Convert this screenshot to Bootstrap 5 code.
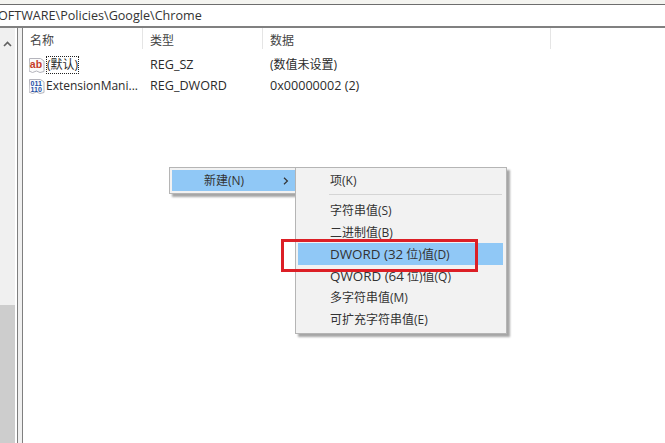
<!DOCTYPE html>
<html lang="zh-CN">
<head>
<meta charset="UTF-8">
<meta name="viewport" content="width=device-width, initial-scale=1.0">
<title>注册表编辑器</title>
<link href="https://cdn.jsdelivr.net/npm/bootstrap@5.3.3/dist/css/bootstrap.min.css" rel="stylesheet">
<style>
  html, body { height: 443px; overflow: hidden; }
  body { font-family: "Open Sans", "Noto Sans CJK SC", sans-serif; font-size: 12px; color: #2b2b2b; background: #fff; line-height: 16px; position: relative; }
  .top-strip { height: 4px; background: #f4f4f0; border-bottom: 1px solid #6d6d6d; box-sizing: content-box; }
  .addr-bar { height: 21px; font-size: 12.6px; line-height: 21px; white-space: nowrap; color: #333; border-bottom: 2px solid #808080; box-sizing: content-box; overflow: hidden; }
  .addr-bar span { display: inline-block; margin-left: -2px; }
  .main-area { height: 415px; }
  .tree-scroll { width: 15px; background: #f0f0f0; flex: none; display: flex; flex-direction: column; }
  .scroll-up { height: 25px; padding-top: 7px; padding-left: 3px; }
  .scroll-space { height: 252px; }
  .scroll-thumb { flex: 1; background: #cdcdcd; }
  .split-bar { margin-left: 2px; flex: none; background: #f0f0f0; border-left: 1px solid #7f7f7f; border-right: 1px solid #7f7f7f; box-sizing: content-box; width: 4px; }
  .list-pane { flex: 1; min-width: 0; }
  .col-name { width: 120px; padding-left: 7px; }
  .col-kind { width: 120px; padding-left: 7px; }
  .col-data { width: 288px; padding-left: 7px; }
  .list-head { height: 25px; color: #444; font-size: 12px; }
  .list-head > div { height: 21px; line-height: 25px; border-right: 1px solid #e5e5e5; }
  .list-row { height: 22px; line-height: 22px; white-space: nowrap; }
  .list-row + .list-row { margin-top: -1px; }
  .list-row .col-name { padding-left: 6px; display: flex; align-items: center; gap: 1px; }
  .list-rows { padding-top: 1px; }
  .wide-text { font-size: 12.6px; }
  .row-focus { outline: 1px dotted #222; outline-offset: -1px; padding: 0 1px; line-height: 18px; }
  .pop-menu { position: absolute; background: #f2f2f2; border: 1px solid #b5b5b5; box-shadow: 3px 3px 2px rgba(0,0,0,.35); color: #333; }
  .menu-left { left: 169px; top: 167px; width: 127px; height: 27px; padding: 2px 0 2px 2px; }
  .menu-left .menu-line { height: 21px; background: #90c8f6; line-height: 21px; padding-left: 32px; display: flex; }
  .menu-left svg { margin: 7px 0 0 39px; }
  .menu-right { left: 295px; top: 167px; width: 212px; height: 167px; padding: 2px; }
  .menu-line { height: 21.8px; line-height: 22px; padding-left: 32px; white-space: nowrap; }
  .menu-sep { height: 1px; background: #d5d5d5; margin: 2px 2px 5px 31px; }
  .menu-line.on { background: #90c8f6; margin-right: 1px; }
  .menu-line b { font-weight: 400; font-size: 13.4px; }
  .red-box { position: absolute; left: 281px; top: 239px; width: 197px; height: 33px; border: 3px solid #dc1f26; pointer-events: none; }
</style>
</head>
<body>
  <div class="top-strip"></div>
  <div class="addr-bar"><span>OFTWARE\Policies\Google\Chrome</span></div>
  <div class="main-area d-flex">
    <div class="tree-scroll">
      <div class="scroll-up">
        <svg width="9" height="6" viewBox="0 0 9 6"><path d="M1 5 4.5 1.5 8 5" fill="none" stroke="#606060" stroke-width="1.6"/></svg>
      </div>
      <div class="scroll-space"></div>
      <div class="scroll-thumb"></div>
    </div>
    <div class="split-bar"></div>
    <div class="list-pane">
      <div class="list-head d-flex">
        <div class="col-name">名称</div>
        <div class="col-kind">类型</div>
        <div class="col-data">数据</div>
      </div>
      <div class="list-rows">
        <div class="list-row d-flex">
          <div class="col-name">
            <svg width="16" height="17" viewBox="0 0 16 17"><path d="M.5 1.500h11l3.500 2.500v10.500l-4 1-3.500-1.500-4 1.500-3.500-1.500z" fill="#fbfbfb" stroke="#b4b4bc"/><text x=".8" y="10.500" font-family="Liberation Sans" font-size="10.500" font-weight="700" fill="#c63c28">ab</text></svg>
            <span class="row-focus">(默认)</span>
          </div>
          <div class="col-kind wide-text">REG_SZ</div>
          <div class="col-data">(数值未设置)</div>
        </div>
        <div class="list-row d-flex">
          <div class="col-name">
            <svg width="16" height="17" viewBox="0 0 16 17"><path d="M.5 1.500h11l3.500 2.500v10.500l-4 1-3.500-1.500-4 1.500-3.500-1.500z" fill="#fbfbfb" stroke="#b4b4bc"/><text x="1.600" y="7.500" font-family="Liberation Sans" font-size="7" font-weight="700" fill="#1c4ea6">011</text><text x="1.600" y="13.500" font-family="Liberation Sans" font-size="7" font-weight="700" fill="#1c4ea6">110</text></svg>
            <span>ExtensionMani...</span>
          </div>
          <div class="col-kind wide-text">REG_DWORD</div>
          <div class="col-data wide-text">0x00000002 (2)</div>
        </div>
      </div>
    </div>
  </div>

  <div class="pop-menu menu-left">
    <div class="menu-line">新建(N)<svg width="6" height="8" viewBox="0 0 6 8"><path d="M1 .8 4.400 4 1 7.200" fill="none" stroke="#333" stroke-width="1.200"/></svg></div>
  </div>
  <div class="pop-menu menu-right">
    <div class="menu-line">项(K)</div>
    <div class="menu-sep"></div>
    <div class="menu-line">字符串值(S)</div>
    <div class="menu-line">二进制值(B)</div>
    <div class="menu-line on"><b>DWORD (32</b> 位)值(D)</div>
    <div class="menu-line"><b>QWORD (64</b> 位)值(Q)</div>
    <div class="menu-line">多字符串值(M)</div>
    <div class="menu-line">可扩充字符串值(E)</div>
  </div>
  <div class="red-box"></div>
  <script src="https://cdn.jsdelivr.net/npm/bootstrap@5.3.3/dist/js/bootstrap.bundle.min.js"></script>
</body>
</html>
